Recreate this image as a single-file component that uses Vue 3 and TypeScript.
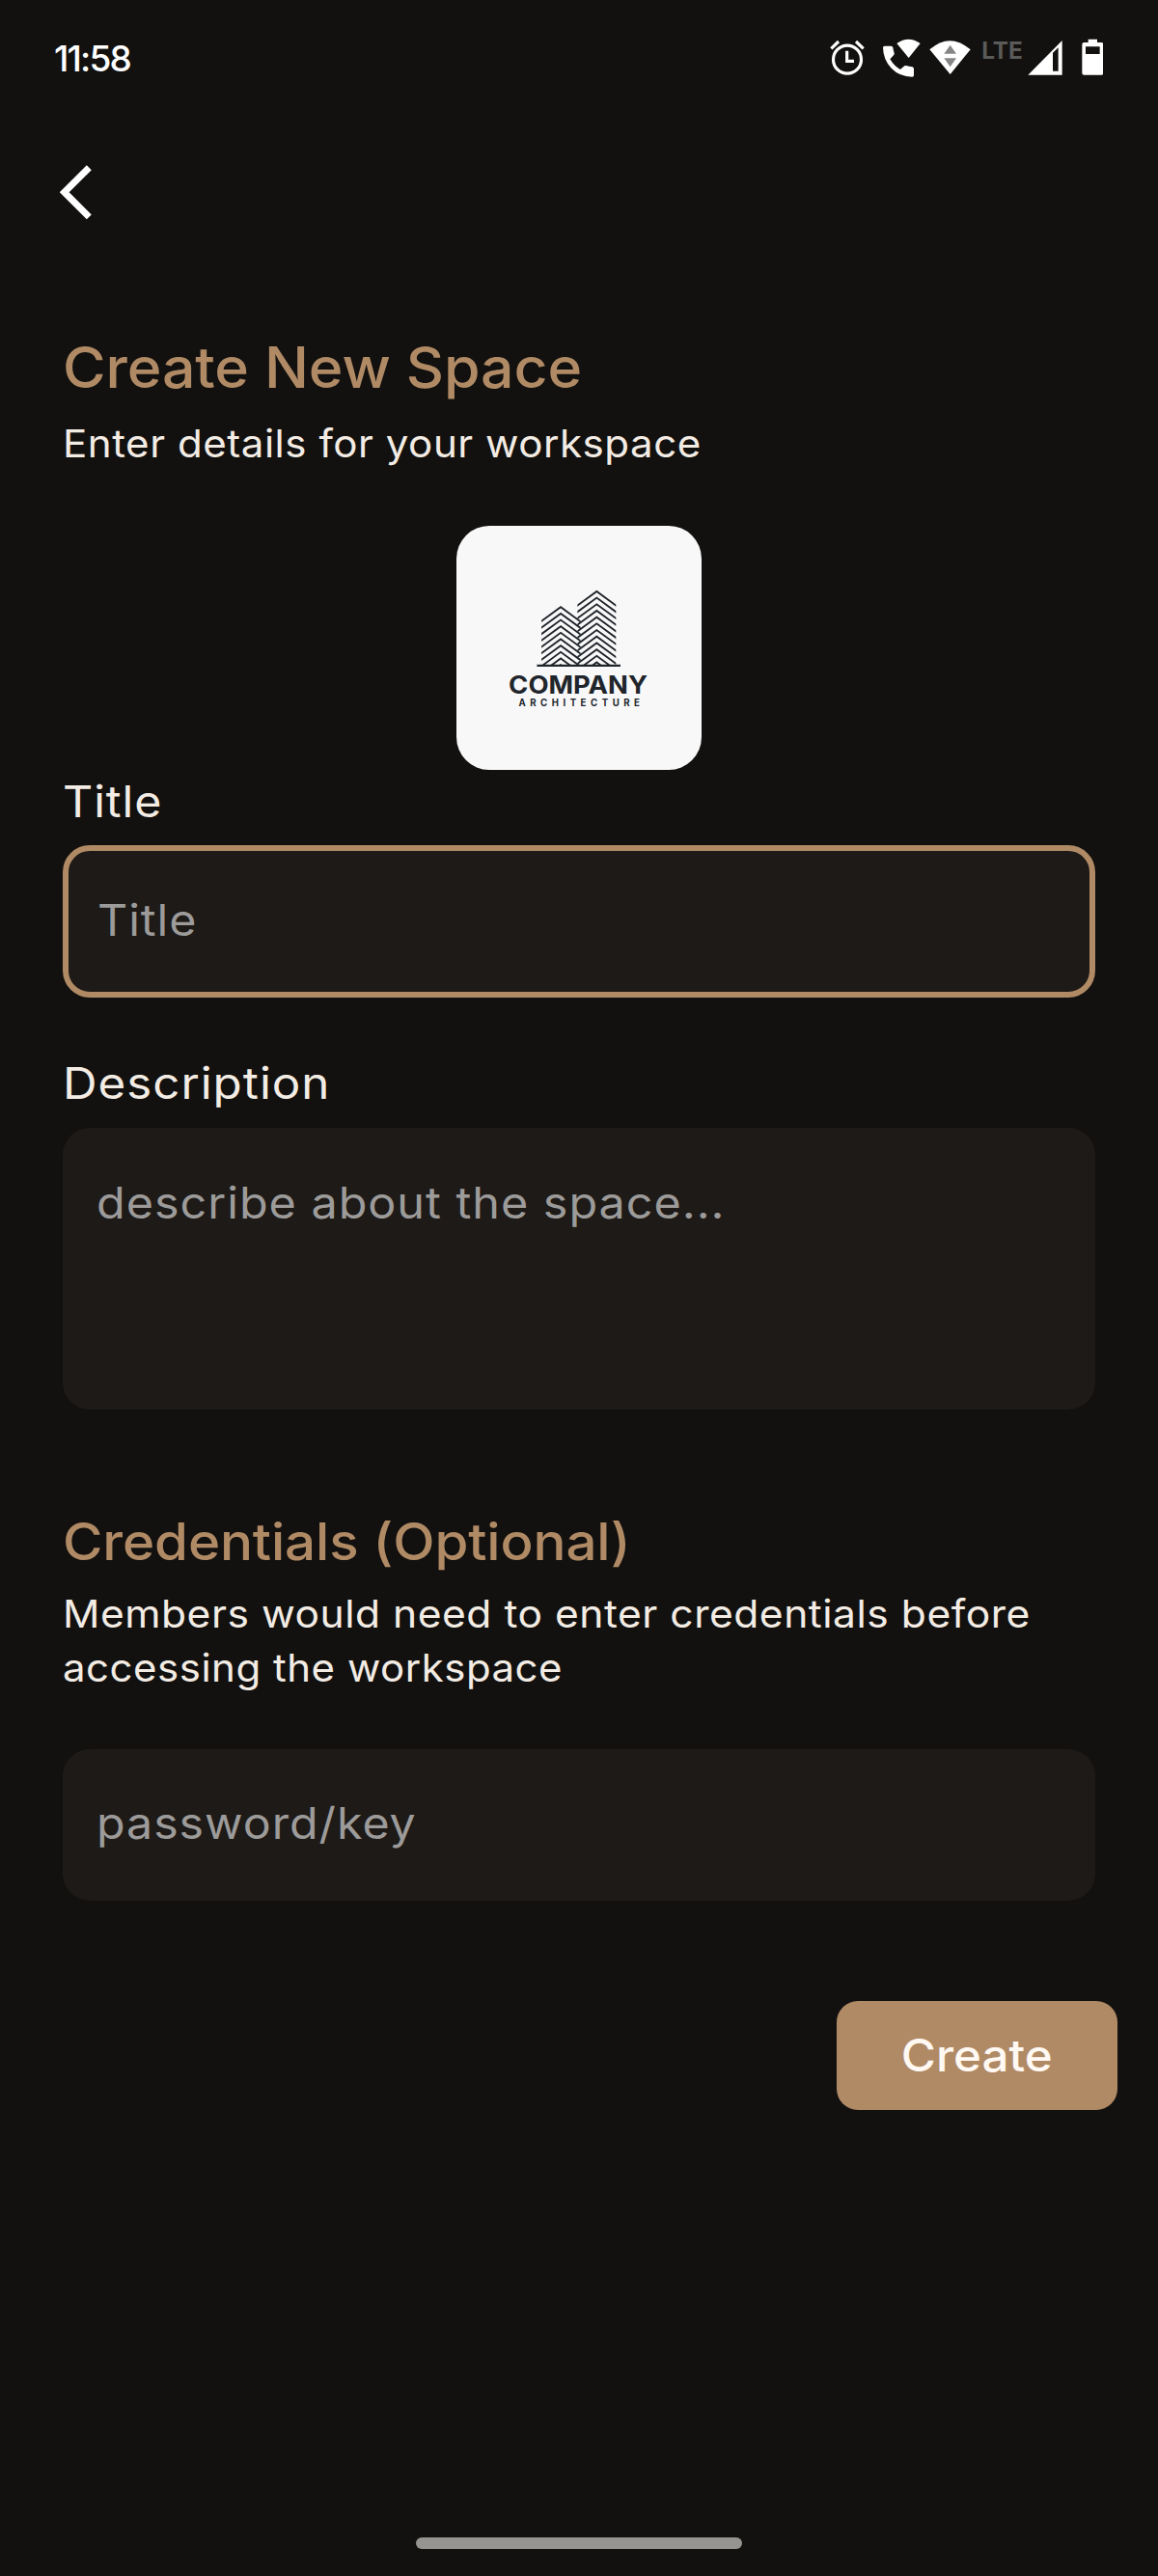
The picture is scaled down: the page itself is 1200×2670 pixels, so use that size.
<script setup lang="ts">
import { ref } from 'vue'

const title = ref('')
const description = ref('')
const password = ref('')

// Chevron polyline for one floor of a building in the company logo
const chevron = (cx: number, y: number) => `M${cx - 66} ${y + 48.4}L${cx} ${y}L${cx + 66} ${y + 48.4}`
const leftFloors = Array.from({ length: 10 }, (_, i) => chevron(364, 296 + i * 20)).join('')
const rightFloors = Array.from({ length: 12 }, (_, i) => chevron(476, 247 + i * 20.1)).join('')
</script>

<template>
  <div class="screen">
    <header class="status">
      <span class="clock">11:58</span>
      <div class="tray">
        <svg class="alarm" viewBox="60 58 108 124">
          <circle cx="114" cy="126" r="43.5" fill="none" stroke="#fff" stroke-width="9.5" />
          <path d="M113 99V131H135" fill="none" stroke="#fff" stroke-width="9.5" />
          <path d="M64 92L87 70M164 92L141 70" fill="none" stroke="#fff" stroke-width="9.5" />
        </svg>
        <svg class="call" viewBox="222 58 120 124">
          <path
            d="M230 84H250Q255 84 256 89Q257 98 260 106Q261 110 258 113L247 125Q260 147 279 157L290 147Q293 144 297 145Q306 148 316 149Q321 150 321 155V175Q321 180 316 180Q276 179 251 153Q226 128 225 89Q225 84 230 84Z"
            fill="#fff"
          />
          <path d="M268 76Q304 50 341 76L305 121Z" fill="#fff" />
        </svg>
        <svg class="wifi" viewBox="370 58 128 124">
          <path d="M371 95Q434 40 498 95L435 172Z" fill="#fff" />
          <path d="M416 108L435 81L454 108ZM416 122H454L435 149Z" fill="#868686" />
        </svg>
        <span class="lte">LTE</span>
        <svg class="signal" viewBox="676 58 108 124">
          <path d="M677 174L783 67V174ZM754 105V162H771V89Z" fill="#fff" fill-rule="evenodd" />
        </svg>
        <svg class="battery" viewBox="842 58 68 124">
          <path
            d="M862 63H890V73H903Q909 73 909 79V168Q909 174 903 174H849Q843 174 843 168V79Q843 73 849 73H862ZM854 86V109H898V86Z"
            fill="#fff"
            fill-rule="evenodd"
          />
        </svg>
      </div>
    </header>

    <nav class="nav">
      <button class="back" type="button" aria-label="Back">
        <svg viewBox="0 0 34 57"><path d="M30.3 2.7L4.7 28.3L30.3 53.9" /></svg>
      </button>
    </nav>

    <main class="form">
      <h1>Create New Space</h1>
      <p class="lead">Enter details for your workspace</p>

      <div class="logo">
        <svg viewBox="40 43 760 760">
          <clipPath id="left-block"><rect x="304" y="280" width="122" height="196" /></clipPath>
          <clipPath id="right-block"><rect x="416" y="230" width="120" height="246" /></clipPath>
          <g fill="none" stroke="#20252b" stroke-width="5.6">
            <path :d="leftFloors" clip-path="url(#left-block)" />
            <path :d="rightFloors" clip-path="url(#right-block)" />
            <path d="M290 478H550" stroke-width="6.5" />
          </g>
          <text class="brand" x="202" y="567" textLength="432" lengthAdjust="spacingAndGlyphs">COMPANY</text>
          <text class="trade" x="233" y="604.5" textLength="377" lengthAdjust="spacing">ARCHITECTURE</text>
        </svg>
      </div>

      <label class="label" for="title">Title</label>
      <div class="field active">
        <input id="title" v-model="title" type="text" placeholder="Title" />
      </div>

      <label class="label second" for="description">Description</label>
      <div class="field area">
        <textarea id="description" v-model="description" placeholder="describe about the space..."></textarea>
      </div>

      <h2>Credentials (Optional)</h2>
      <p class="note">
        <span class="line first">Members would need to enter credentials before</span>
        <span class="line">accessing the workspace</span>
      </p>
      <div class="field key">
        <input v-model="password" type="text" placeholder="password/key" />
      </div>

      <button class="create" type="button"><span>Create</span></button>
    </main>

    <div class="home"></div>
  </div>
</template>

<style>
body {
  background: #12110f;
}
</style>

<style scoped>
.screen {
  display: flex;
  flex-direction: column;
  box-sizing: border-box;
  width: 1200px;
  height: 2670px;
  background: #12110f;
  color: #f3ece4;
  font-family: Inter, "Liberation Sans", sans-serif;
  overflow: hidden;
}
.status {
  display: flex;
  align-items: center;
  justify-content: space-between;
  height: 120px;
  padding: 0 56.7px 0 56px;
}
.clock {
  color: #fff;
  font-size: 37px;
  font-weight: 500;
  letter-spacing: -1.8px;
}
.tray {
  display: flex;
  align-items: center;
}
.tray svg {
  display: block;
  height: 41.33px;
}
.alarm { width: 36px; }
.call { width: 40px; margin-left: 18px; }
.wifi { width: 42.67px; margin-left: 9.33px; }
.lte {
  width: 44px;
  margin: 0 0 16px 11.33px;
  color: #5a5a59;
  font-size: 24.3px;
  font-weight: 700;
  line-height: 30px;
}
.signal { width: 36px; margin-left: 4px; }
.battery { width: 22.67px; margin-left: 19.33px; }
.nav {
  display: flex;
  align-items: center;
  height: 158px;
  padding-left: 61.5px;
}
.back {
  padding: 0;
  border: 0;
  background: none;
}
.back svg {
  display: block;
  width: 34px;
  height: 57px;
}
.back path {
  fill: none;
  stroke: #fff;
  stroke-width: 7;
}
.form {
  display: flex;
  flex-direction: column;
  align-items: flex-start;
  padding: 66px 65px 0;
}
h1,
h2,
p {
  margin: 0;
}
h1,
h2,
.lead,
.line,
.label,
.field input,
.field textarea {
  transform: scaleX(var(--stretch));
  transform-origin: 0 50%;
}
h1 {
  --stretch: 1.03;
  margin-left: -0.5px;
  color: #b08a65;
  font-size: 59px;
  font-weight: 550;
  line-height: 74px;
  letter-spacing: -0.1px;
}
.lead,
.note {
  font-size: 40px;
  line-height: 56px;
  letter-spacing: 0.5px;
}
.lead {
  --stretch: 1.052;
  margin-top: 14px;
}
.logo {
  align-self: center;
  width: 253.4px;
  height: 253px;
  margin-top: 56.6px;
  border-radius: 34px;
  background: #f8f8f8;
  overflow: hidden;
}
.logo svg {
  display: block;
  width: 100%;
  height: 100%;
}
.brand,
.trade {
  fill: #20252b;
  font-weight: 700;
}
.brand { font-size: 76px; }
.trade { font-size: 29px; }
.label {
  --stretch: 1.074;
  margin-top: 5px;
  font-size: 45px;
  line-height: 56px;
  letter-spacing: 0.9px;
}
.label.second {
  --stretch: 1.095;
  margin-top: 60.7px;
}
.field {
  box-sizing: border-box;
  width: 1070px;
  height: 157.5px;
  margin-top: 17.8px;
  padding: 0 34px 4px 35px;
  border-radius: 28px;
  background: #1e1a17;
  overflow: hidden;
}
.field input,
.field textarea {
  --stretch: 1.074;
  display: block;
  box-sizing: border-box;
  width: 920px;
  height: 100%;
  padding: 0;
  border: 0;
  outline: 0;
  background: none;
  color: #f3ece4;
  font: 45px Inter, "Liberation Sans", sans-serif;
  letter-spacing: 0.9px;
  resize: none;
}
.field textarea {
  --stretch: 1.078;
  line-height: 56px;
  overflow: hidden;
}
.field ::placeholder {
  color: #9c9b9a;
  opacity: 1;
}
.field.active {
  padding: 0 30px 4px;
  border: 6px solid #b08a65;
}
.field.area {
  height: 292.5px;
  margin-top: 18.4px;
  padding: 49.6px 34px 0 34.5px;
}
h2 {
  --stretch: 1.066;
  margin-top: 104px;
  margin-left: -0.5px;
  color: #b08a65;
  font-size: 53px;
  font-weight: 550;
  line-height: 66px;
  letter-spacing: -0.1px;
}
.note {
  margin-top: 14px;
}
.line {
  --stretch: 1.049;
  display: block;
  white-space: nowrap;
}
.line.first {
  --stretch: 1.063;
}
.field.key {
  margin-top: 55.5px;
}
.create {
  align-self: flex-end;
  width: 291px;
  height: 113px;
  margin: 103.8px -23px 0 0;
  padding: 0 0 1px;
  border: 0;
  border-radius: 22px;
  background: #b08a65;
  color: #fff8f3;
  font: 550 46px Inter, "Liberation Sans", sans-serif;
}
.create span {
  display: inline-block;
  transform: scaleX(1.07);
}
.home {
  width: 338px;
  height: 11.5px;
  margin: auto auto 28.3px;
  border-radius: 6px;
  background: #969491;
}
</style>
